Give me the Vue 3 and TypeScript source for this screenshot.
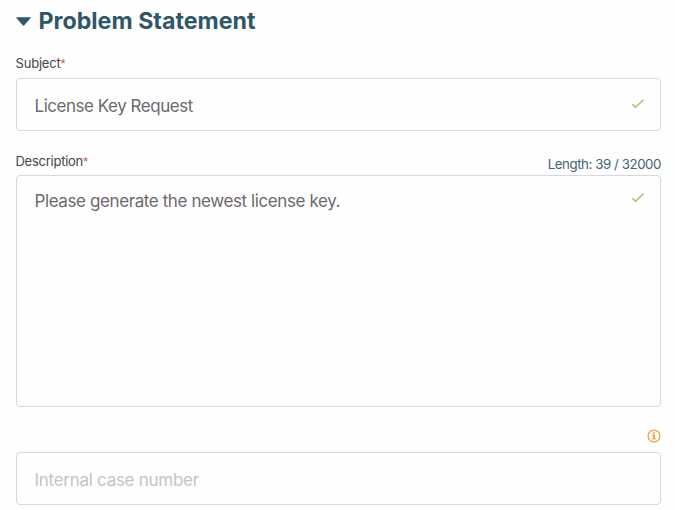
<script setup lang="ts">
import { ref } from 'vue'

const open = ref(true)
const subject = ref('License Key Request')
const description = ref('Please generate the newest license key.')
const caseNumber = ref('')
const maxLength = 32000
</script>

<template>
  <main class="form">
    <h2 class="title" @click="open = !open">
      <svg class="caret" viewBox="0 0 15 9"><path d="M.6.3h13.8q.6.2.2.8L8.3 8.3q-.8.7-1.6 0L.4 1.1Q0 .5.6.3Z" /></svg>
      <span class="title-text">Problem Statement</span>
    </h2>

    <template v-if="open">
      <div class="label-row subject-row">
        <label class="label subject-label" for="subject">Subject<span class="required">*</span></label>
      </div>
      <div class="control">
        <input id="subject" v-model="subject" class="value subject-value" spellcheck="false" />
        <svg class="check" viewBox="0 0 14 12"><path d="M1.4 6.3 4.5 9.2 12.5 1.8" /></svg>
      </div>

      <div class="label-row description-row">
        <label class="label description-label" for="description">Description<span class="required">*</span></label>
        <span class="length">Length: {{ description.length }} / {{ maxLength }}</span>
      </div>
      <div class="control tall">
        <textarea id="description" v-model="description" class="value description-value" spellcheck="false"></textarea>
        <svg class="check" viewBox="0 0 14 12"><path d="M1.4 6.3 4.5 9.2 12.5 1.8" /></svg>
      </div>

      <div class="info-row">
        <svg class="info" viewBox="0 0 14 14">
          <circle cx="7" cy="7" r="5.9" />
          <path d="M6.1 3.2h1.9v1.5H6.1zM5.2 5.6H8v3.7h.8v1.3H5.2V9.3H6V6.9h-.8z" />
        </svg>
      </div>
      <div class="control">
        <input v-model="caseNumber" class="value case-value" placeholder="Internal case number" />
      </div>
    </template>
  </main>
</template>

<style>
body {
  background: #fefefe;
}
</style>

<style scoped>
.form {
  box-sizing: border-box;
  width: 675px;
  height: 510px;
  padding: 5px 14px 0 15.5px;
  overflow: hidden;
  font-family: Inter, "Liberation Sans", sans-serif;
}
.title {
  display: flex;
  align-items: center;
  gap: 8px;
  height: 32px;
  margin: 0;
  color: #305768;
  font-size: 23.2px;
  font-weight: 700;
  line-height: 32px;
  white-space: nowrap;
}
.caret {
  width: 15px;
  height: 9px;
  fill: currentColor;
}
.title-text {
  letter-spacing: 0.02px;
}
.label-row {
  display: flex;
  justify-content: space-between;
  white-space: nowrap;
}
.subject-row {
  height: 41px;
  padding-top: 16px;
  box-sizing: border-box;
}
.description-row {
  height: 44px;
  padding-top: 20px;
  box-sizing: border-box;
}
.label {
  color: #444548;
  font-size: 13px;
  line-height: 20px;
  letter-spacing: -0.2px;
}
.description-label {
  letter-spacing: -0.26px;
}
.required {
  color: #d84b43;
  font-family: "Liberation Sans", sans-serif;
  font-size: 13px;
  line-height: 1;
}
.length {
  padding-top: 3px;
  color: #436370;
  font-size: 13.3px;
  line-height: 20px;
  letter-spacing: -0.44px;
}
.control {
  display: flex;
  align-items: center;
  box-sizing: border-box;
  height: 53px;
  padding: 2px 15.5px 0 18px;
  border: 1.5px solid #d8d7dc;
  border-radius: 4px;
  background: #fefefe;
}
.tall {
  align-items: flex-start;
  height: 232px;
  padding-top: 12px;
}
.value {
  flex: 1;
  min-width: 0;
  height: 26px;
  margin: 0;
  padding: 0;
  border: 0;
  outline: 0;
  background: transparent;
  color: #6c696e;
  font-family: inherit;
  font-size: 17px;
  line-height: 26px;
}
.subject-value {
  letter-spacing: -0.47px;
}
.description-value {
  height: 205px;
  overflow: hidden;
  resize: none;
  letter-spacing: -0.4px;
}
.case-value {
  letter-spacing: -0.28px;
}
.value::placeholder {
  color: #c4c4c6;
  opacity: 1;
}
.check {
  width: 14px;
  height: 12px;
  margin-top: -3px;
  fill: none;
  stroke: #92c36b;
  stroke-width: 1.4;
}
.tall .check {
  margin-top: 4px;
}
.info-row {
  display: flex;
  justify-content: flex-end;
  align-items: center;
  height: 45px;
  padding-top: 12px;
  box-sizing: border-box;
}
.info {
  width: 14px;
  height: 14px;
  fill: #eda64b;
}
.info circle {
  fill: none;
  stroke: #eda64b;
  stroke-width: 1.4;
}
</style>
